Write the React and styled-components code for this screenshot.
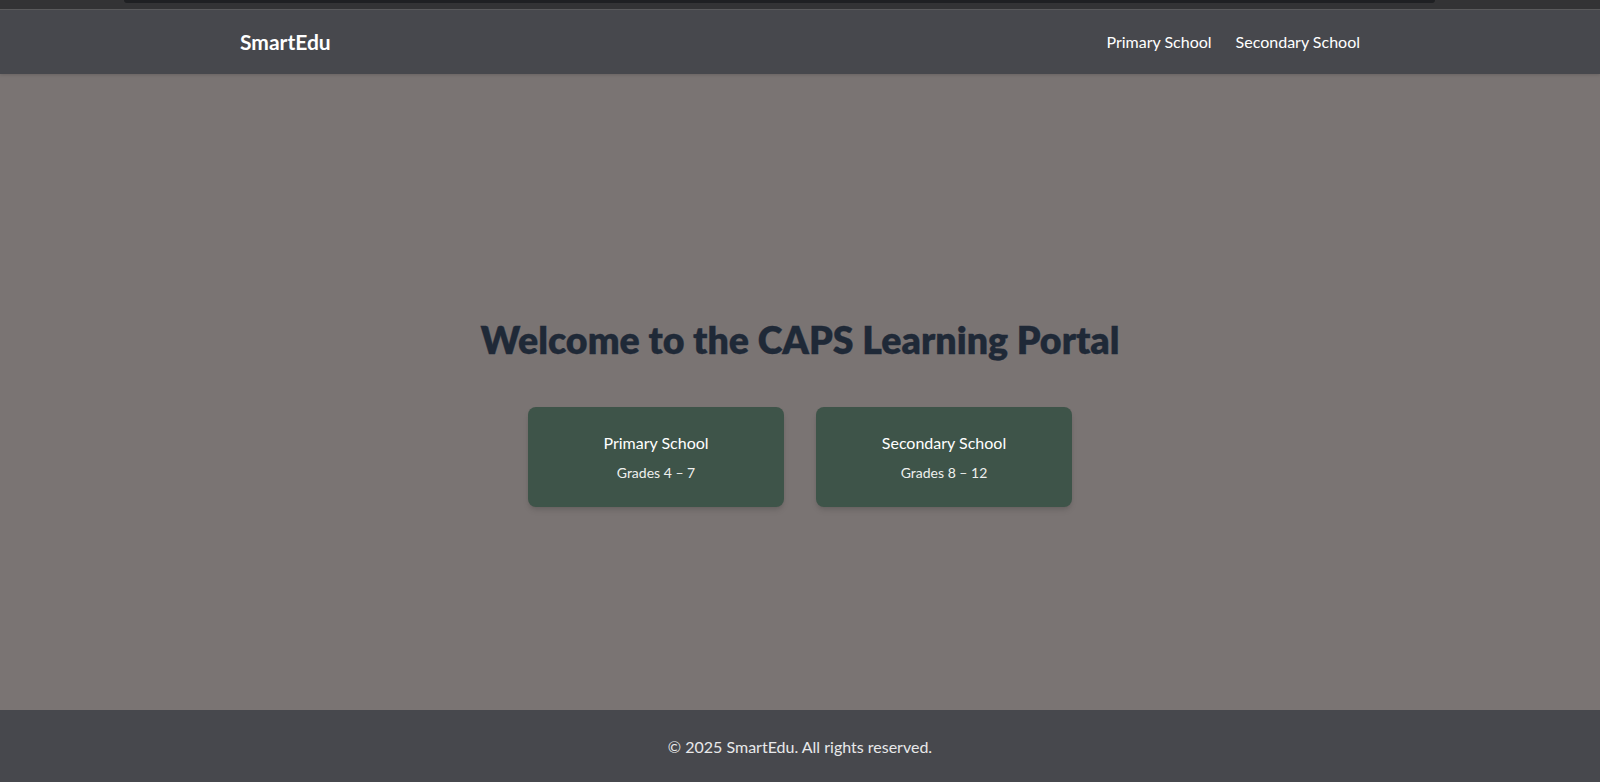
import React from "react";
import styled, { createGlobalStyle } from "styled-components";

const Global = createGlobalStyle`
  html, body { margin: 0; padding: 0; }
  body {
    font-family: Lato, "Open Sans", "Noto Sans", sans-serif;
    background: #7a7473;
  }
  #root { min-height: 782px; display: flex; flex-direction: column; }
`;

const Page = styled.div`
  min-height: 782px;
  display: flex;
  flex-direction: column;
  background: #7a7473;
`;

const ChromeStrip = styled.div`
  height: 9px;
  background: #333335;
  border-bottom: 1px solid #5a5a5c;
  position: relative;
  flex-shrink: 0;
`;

const ChromeBar = styled.div`
  position: absolute;
  left: 124px;
  right: 165px;
  top: 0;
  height: 3px;
  background: #1f2023;
  border-radius: 0 0 8px 8px;
`;

const Header = styled.header`
  background: #47484d;
  height: 64px;
  flex-shrink: 0;
  box-shadow: 0 1px 3px rgba(0, 0, 0, 0.15);
`;

const Container = styled.div`
  max-width: 1152px;
  margin: 0 auto;
  padding: 0 16px 1px;
  height: 100%;
  box-sizing: border-box;
  display: flex;
  align-items: center;
  justify-content: space-between;
`;

const Brand = styled.div`
  color: #ffffff;
  font-size: 21px;
  font-weight: 700;
`;

const Nav = styled.nav`
  display: flex;
  gap: 24px;
`;

const NavLink = styled.a`
  color: #ffffff;
  font-size: 16px;
  text-decoration: none;
  cursor: pointer;
`;

const Main = styled.main`
  flex: 1;
  display: flex;
  flex-direction: column;
  align-items: center;
  padding-top: 242px;
`;

const Title = styled.h1`
  margin: 0 0 43px;
  font-size: 37.5px;
  line-height: 48px;
  font-weight: 800;
  color: #1f2937;
  text-align: center;
  -webkit-text-stroke: 0.3px #1f2937;
`;

const Cards = styled.div`
  display: flex;
  gap: 32px;
`;

const Card = styled.a`
  width: 256px;
  box-sizing: border-box;
  padding: 24px;
  background: #3e5449;
  border-radius: 8px;
  box-shadow: 0 4px 6px -1px rgba(0, 0, 0, 0.12), 0 2px 4px -2px rgba(0, 0, 0, 0.1);
  text-align: center;
  color: #ffffff;
  text-decoration: none;
  cursor: pointer;
`;

const CardTitle = styled.div`
  font-size: 16px;
  line-height: 24px;
  font-weight: 400;
`;

const CardSub = styled.div`
  margin-top: 8px;
  font-size: 14px;
  line-height: 20px;
  color: #eef0ee;
`;

const Footer = styled.footer`
  background: #47484d;
  height: 72px;
  flex-shrink: 0;
  display: flex;
  align-items: center;
  justify-content: center;
  color: #e8e8ea;
  font-size: 16px;
`;

export default function App() {
  return (
    <Page>
      <Global />
      <ChromeStrip>
        <ChromeBar />
      </ChromeStrip>
      <Header>
        <Container>
          <Brand>SmartEdu</Brand>
          <Nav>
            <NavLink>Primary School</NavLink>
            <NavLink>Secondary School</NavLink>
          </Nav>
        </Container>
      </Header>
      <Main>
        <Title>Welcome to the CAPS Learning Portal</Title>
        <Cards>
          <Card>
            <CardTitle>Primary School</CardTitle>
            <CardSub>Grades 4 – 7</CardSub>
          </Card>
          <Card>
            <CardTitle>Secondary School</CardTitle>
            <CardSub>Grades 8 – 12</CardSub>
          </Card>
        </Cards>
      </Main>
      <Footer>© 2025 SmartEdu. All rights reserved.</Footer>
    </Page>
  );
}
